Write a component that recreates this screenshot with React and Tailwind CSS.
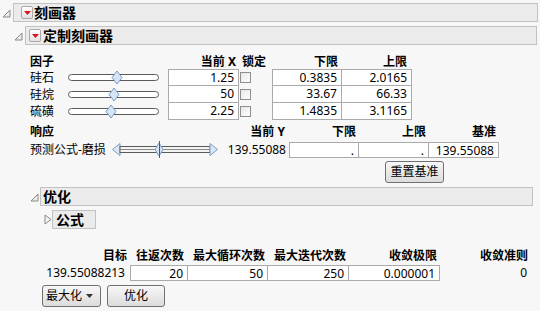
import React from 'react';

const font = "font-['Noto_Sans','Noto_Sans_CJK_SC',sans-serif]";

function Disclose({ open = true }) {
  return open ? (
    <svg width="9" height="9" viewBox="0 0 9 9">
      <polygon points="8,1 8,8 1,8" fill="#ececec" stroke="#8a8a8a" strokeWidth="1" />
    </svg>
  ) : (
    <svg width="8" height="11" viewBox="0 0 8 11">
      <polygon points="1,1 7,5.5 1,10" fill="#f2f2f2" stroke="#8a8a8a" strokeWidth="1" />
    </svg>
  );
}

function RedMenu() {
  return (
    <span className="flex w-[12px] h-[13px] items-center justify-center rounded-[2px] border border-[#a9a9a9] bg-gradient-to-b from-white to-[#e2e2e2]">
      <svg width="7" height="4" viewBox="0 0 7 4">
        <polygon points="0,0 7,0 3.5,4" fill="#d7141a" />
      </svg>
    </span>
  );
}

function FactorSlider({ pos }) {
  return (
    <svg width="92" height="17" viewBox="0 0 92 17">
      <rect x="0.5" y="5.5" width="90" height="6" rx="3" fill="#fff" stroke="#5a5a5a" />
      <polygon
        points={`${pos},2 ${pos + 5},8.5 ${pos},15 ${pos - 5},8.5`}
        fill="#d5e3f5"
        stroke="#7b9bc9"
      />
    </svg>
  );
}

function ResponseSlider() {
  return (
    <svg width="106" height="17" viewBox="0 0 106 17">
      <polygon points="0.5,8.5 8,2.5 8,14.5" fill="#dbe7f6" stroke="#7b9bc9" />
      <rect x="8" y="5.5" width="90" height="6" fill="#f4f4f4" stroke="#5a5a5a" />
      <line x1="8" y1="8.5" x2="98" y2="8.5" stroke="#8a8a8a" />
      <polygon points="105.5,8.5 98,2.5 98,14.5" fill="#dbe7f6" stroke="#7b9bc9" />
      <polygon points="47,2 51,8.5 47,15 43,8.5" fill="#d5e3f5" stroke="#7b9bc9" />
      <line x1="47.5" y1="0" x2="47.5" y2="17" stroke="#e0202a" strokeWidth="1" />
    </svg>
  );
}

const factors = [
  { name: '硅石', pos: 49, cur: '1.25', lo: '0.3835', hi: '2.0165' },
  { name: '硅烷', pos: 46, cur: '50', lo: '33.67', hi: '66.33' },
  { name: '硫磺', pos: 43, cur: '2.25', lo: '1.4835', hi: '3.1165' },
];

const cell = 'bg-white border-[#aaaaaa] text-right pr-[4px] leading-[16px]';

export default function App() {
  return (
    <div className={`w-[540px] h-[311px] overflow-hidden bg-[#f7f7f7] text-[12px] text-black ${font}`}>
      {/* 刻画器 */}
      <div className="flex items-center pt-[3px]">
        <div className="w-[13px] pl-[2px] pt-[1px]">
          <Disclose />
        </div>
        <div className="flex h-[19px] w-[525px] items-center gap-[1px] border border-[#c2c2c2] bg-[#ebebeb] pl-[7px]">
          <RedMenu />
          <span className="text-[14px] font-bold leading-none">刻画器</span>
        </div>
      </div>

      {/* 定制刻画器 */}
      <div className="mt-[4px] flex items-center pl-[14px]">
        <div className="w-[11px] pt-[1px]">
          <Disclose />
        </div>
        <div className="flex h-[19px] w-[512px] items-center gap-[2px] border border-[#c2c2c2] bg-[#ebebeb] pl-[3px]">
          <RedMenu />
          <span className="text-[14px] font-bold leading-none">定制刻画器</span>
        </div>
      </div>

      <div className="pl-[30px]">
        <div className="mt-[10px] flex h-[14px] items-center font-bold">
          <span className="w-[138px]">因子</span>
          <span className="w-[70px] pr-[2px] text-right">当前 X</span>
          <span className="ml-[4px] w-[30px]">锁定</span>
          <span className="w-[70px] pr-[4px] text-right">下限</span>
          <span className="w-[70px] pr-[5px] text-right">上限</span>
        </div>

        {factors.map((f, i) => (
          <div key={f.name} className="flex h-[17px] items-end">
            <span className="w-[38px] self-center">{f.name}</span>
            <div className="w-[92px] self-center">
              <FactorSlider pos={f.pos} />
            </div>
            <div className={`ml-[8px] h-[17px] w-[71px] border-x border-b ${i === 0 ? 'border-t' : ''} ${cell}`}>
              {f.cur}
            </div>
            <span className="ml-[1px] h-[11px] w-[11px] self-center border border-[#8e8e8e] bg-gradient-to-br from-[#e6e6e6] to-white" />
            <div className={`ml-[21px] h-[17px] w-[70px] border-x border-b ${i === 0 ? 'border-t' : ''} ${cell}`}>
              {f.lo}
            </div>
            <div className={`h-[17px] w-[70px] border-r border-b ${i === 0 ? 'border-t' : ''} ${cell}`}>
              {f.hi}
            </div>
          </div>
        ))}

        <div className="mt-[5px] flex h-[14px] items-center font-bold">
          <span className="w-[180px]">响应</span>
          <span className="w-[79px] pr-[4px] text-right">当前 Y</span>
          <span className="w-[70px] pr-[3px] text-right">下限</span>
          <span className="w-[70px] pr-[3px] text-right">上限</span>
          <span className="w-[70px] pr-[3px] text-right">基准</span>
        </div>

        <div className="mt-[2px] flex h-[17px] items-center">
          <span className="w-[82px] whitespace-nowrap">预测公式-磨损</span>
          <ResponseSlider />
          <span className="w-[71px] pr-[3px] text-right">139.55088</span>
          <div className={`h-[16px] w-[70px] border ${cell}`}>.</div>
          <div className={`h-[16px] w-[70px] border-y border-r ${cell}`}>.</div>
          <div className={`h-[16px] w-[70px] border-y border-r ${cell}`}>139.55088</div>
        </div>

        <div className="mt-[3px] pl-[355px]">
          <button className="h-[22px] w-[59px] rounded-[3px] border border-[#707070] bg-gradient-to-b from-[#f7f7f7] to-[#dcdcdc] text-[12px] leading-none">
            重置基准
          </button>
        </div>
      </div>

      {/* 优化 */}
      <div className="mt-[4px] flex items-center pl-[30px]">
        <div className="w-[10px] pt-[1px]">
          <Disclose />
        </div>
        <div className="flex h-[19px] w-[493px] items-center border border-[#c2c2c2] bg-[#ebebeb] pl-[2px]">
          <span className="text-[14px] font-bold leading-none">优化</span>
        </div>
      </div>

      <div className="mt-[4px] flex items-center pl-[44px]">
        <div className="w-[8px]">
          <Disclose open={false} />
        </div>
        <div className="flex h-[19px] w-[44px] items-center border border-[#c2c2c2] bg-[#ebebeb] pl-[3px]">
          <span className="text-[14px] font-bold leading-none">公式</span>
        </div>
      </div>

      <div className="pl-[30px]">
        <div className="mt-[20px] flex h-[14px] items-center whitespace-nowrap font-bold">
          <span className="w-[100px] pr-[3px] text-right">目标</span>
          <span className="w-[58px] pr-[4px] text-right">往返次数</span>
          <span className="w-[80px] pr-[3px] text-right">最大循环次数</span>
          <span className="w-[81px] pr-[3px] text-right">最大迭代次数</span>
          <span className="w-[91px] pr-[3px] text-right">收敛极限</span>
          <span className="w-[88px] text-right">收敛准则</span>
        </div>
        <div className="mt-[2px] flex h-[16px] items-center">
          <span className="w-[100px] pr-[5px] text-right">139.55088213</span>
          <div className={`h-[16px] w-[58px] border ${cell}`}>20</div>
          <div className={`h-[16px] w-[80px] border-y border-r ${cell}`}>50</div>
          <div className={`h-[16px] w-[81px] border-y border-r ${cell}`}>250</div>
          <div className={`h-[16px] w-[91px] border-y border-r ${cell}`}>0.000001</div>
          <span className="w-[88px] pr-[1px] text-right">0</span>
        </div>

        <div className="mt-[4px] flex gap-[6px] pl-[12px]">
          <button className="flex h-[22px] w-[59px] items-center justify-between rounded-[3px] border border-[#707070] bg-gradient-to-b from-[#f7f7f7] to-[#dcdcdc] pl-[3px] pr-[7px] text-[12px] leading-none">
            <span>最大化</span>
            <svg width="7" height="4" viewBox="0 0 7 4">
              <polygon points="0,0 7,0 3.5,4" fill="#333" />
            </svg>
          </button>
          <button className="h-[22px] w-[58px] rounded-[3px] border border-[#707070] bg-gradient-to-b from-[#f7f7f7] to-[#dcdcdc] text-[12px] leading-none">
            优化
          </button>
        </div>
      </div>
    </div>
  );
}
